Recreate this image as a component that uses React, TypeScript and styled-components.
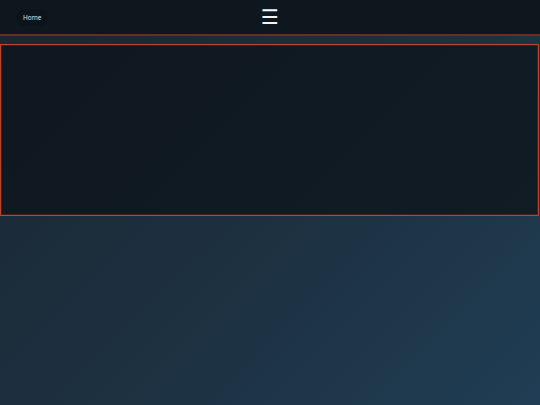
import styled, { createGlobalStyle } from 'styled-components';

const GlobalStyle = createGlobalStyle`
	html, body {
		margin: 0;
		padding: 0;
		height: 100%;
	}
	body {
		font-family: 'Open Sans', 'DejaVu Sans', sans-serif;
		background: linear-gradient(135deg, #1a2632 0%, #1d3141 55%, #1f3d54 100%);
		min-height: 405px;
		color: #fff;
	}
`;

const Page = styled.div`
	display: flex;
	flex-direction: column;
	gap: 8px;
	min-height: 405px;
`;

const Header = styled.header`
	display: flex;
	align-items: center;
	height: 34px;
	padding: 0 16px;
	background-color: #0e161e;
	border-bottom: 2px solid rgba(170, 70, 45, 0.55);
	position: relative;
`;

const NavLink = styled.a`
	font-size: 6.5px;
	color: #e8ecef;
	text-decoration: none;
	padding: 4px 7px;
	border-radius: 8px;
	background-color: rgba(0, 0, 0, 0.08);
`;

const MenuButton = styled.button`
	position: absolute;
	left: 50%;
	top: 50%;
	transform: translate(-50%, -50%);
	background: none;
	border: none;
	color: #f2f4f6;
	font-size: 20px;
	line-height: 1;
	padding: 0;
	cursor: pointer;
	font-family: 'DejaVu Sans', sans-serif;
`;

const Panel = styled.section`
	height: 170px;
	background: linear-gradient(135deg, #0f1820 0%, #101a22 60%, #111c25 100%);
	border: 1px solid #b8442b;
	box-shadow: inset 0 0 0 1px rgba(120, 45, 30, 0.45);
	margin: 0 1px 0 0;
`;

const App = () => (
	<>
		<GlobalStyle />
		<Page>
			<Header>
				<NavLink href="#">Home</NavLink>
				<MenuButton aria-label="menu">☰</MenuButton>
			</Header>
			<Panel />
		</Page>
	</>
);

export default App;
